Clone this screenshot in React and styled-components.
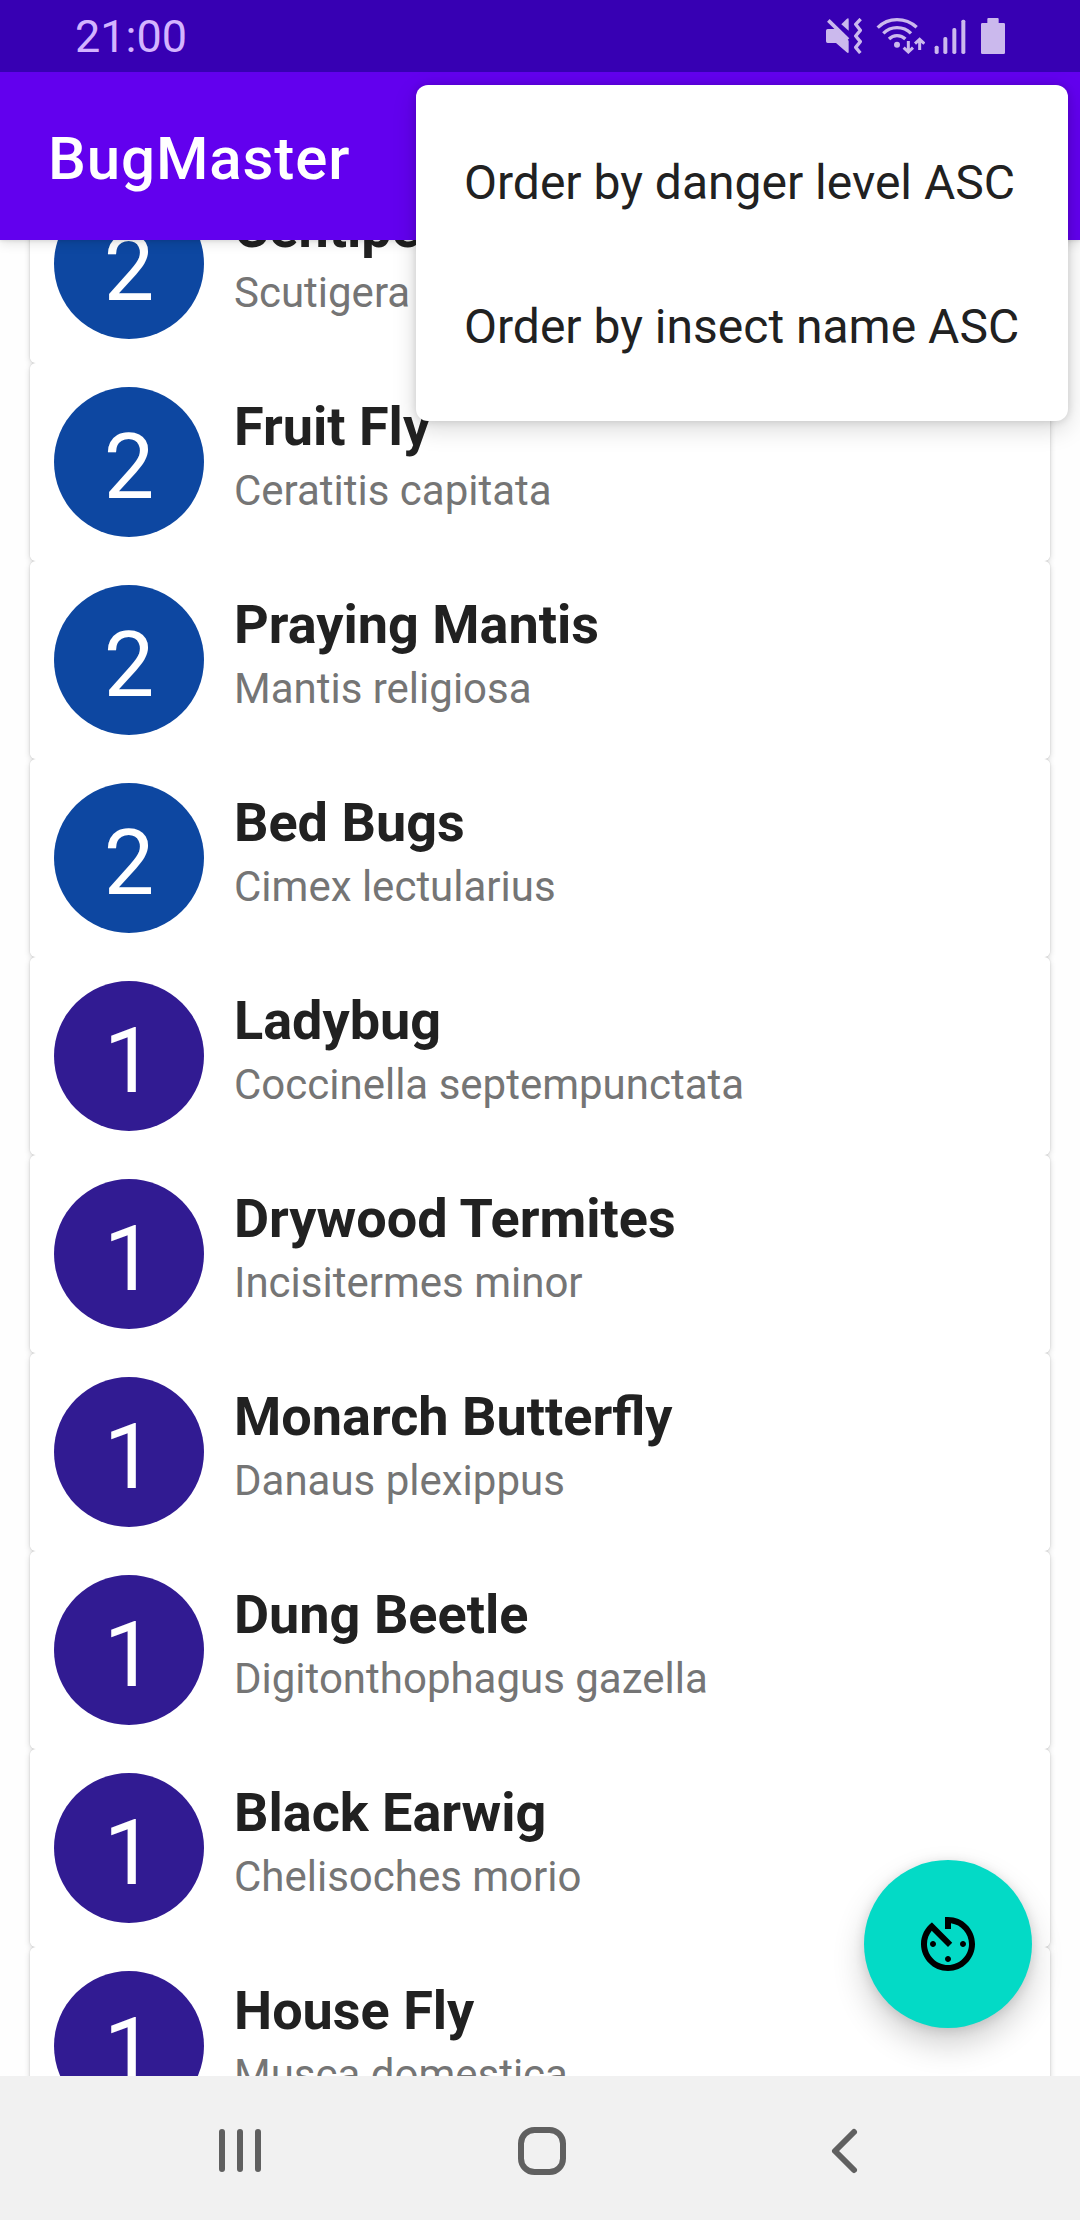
import React from "react";
import styled, { createGlobalStyle } from "styled-components";

const GlobalStyle = createGlobalStyle`
  * { box-sizing: border-box; }
  html, body { margin: 0; padding: 0; }
  body {
    width: 1080px;
    height: 2220px;
    overflow: hidden;
    background: #fefefe;
    font-family: Roboto, "Noto Sans", sans-serif;
  }
`;

const Screen = styled.div`
  position: relative;
  display: flex;
  flex-direction: column;
  width: 1080px;
  height: 2220px;
  overflow: hidden;
  background: #fefefe;
`;

const StatusBar = styled.header`
  display: flex;
  flex: none;
  align-items: center;
  justify-content: space-between;
  height: 72px;
  padding: 0 75px;
  background: #3700b3;
  z-index: 2;
`;

const Clock = styled.time`
  font-size: 45px;
  line-height: 54px;
  padding-top: 2px;
  color: #d3b4ff;
`;

const StatusIcons = styled.div`
  display: flex;
  align-items: center;
`;

const StatusIcon = styled.svg`
  display: block;
  width: ${(p) => p.$width}px;
  height: 36px;
  margin-left: ${(p) => p.$gap || 0}px;
  fill: #cbb9ed;
  stroke: #cbb9ed;
  stroke-width: 0;
`;

const AppBar = styled.div`
  display: flex;
  flex: none;
  align-items: center;
  height: 168px;
  padding: 5px 48px 0;
  background: #6200ee;
  box-shadow: 0 2px 12px rgba(0, 0, 0, 0.14), 0 1px 3px rgba(0, 0, 0, 0.08);
  z-index: 1;
`;

const AppTitle = styled.h1`
  margin: 0;
  font-size: 60px;
  font-weight: 500;
  line-height: 70px;
  letter-spacing: 0.9px;
  color: #fff;
`;

const Content = styled.main`
  display: flex;
  flex: 1;
  flex-direction: column;
  justify-content: flex-end;
  min-height: 0;
  overflow: hidden;
  isolation: isolate;
`;

const List = styled.ul`
  display: flex;
  flex: none;
  flex-direction: column;
  margin: 0 0 -69px;
  padding: 0 30px;
  list-style: none;
`;

const Card = styled.li`
  position: relative;
  display: flex;
  flex: none;
  gap: 30px;
  height: 198px;
  padding: 24px;
  border-radius: 6px;
  background: #fff;

  &::before {
    content: "";
    position: absolute;
    inset: 0;
    z-index: -1;
    border-radius: 6px;
    box-shadow: 0 2px 6px rgba(0, 0, 0, 0.16), 0 0 2px rgba(0, 0, 0, 0.16);
  }
`;

const DangerLevel = styled.div`
  display: flex;
  flex: none;
  align-items: center;
  justify-content: center;
  width: 150px;
  height: 150px;
  padding-top: 12px;
  border-radius: 50%;
  background: ${(p) => (p.$level === 2 ? "#0d47a1" : "#311b92")};
  color: #fff;
  font-size: 90px;
  line-height: 106px;
`;

const Names = styled.div`
  display: flex;
  flex-direction: column;
  gap: 7px;
  padding-top: 8px;
  white-space: nowrap;
`;

const InsectName = styled.span`
  font-size: 54px;
  font-weight: 700;
  line-height: 64px;
  color: #212121;
`;

const ScientificName = styled.span`
  font-size: 42px;
  line-height: 50px;
  color: #757575;
`;

const Menu = styled.div`
  position: absolute;
  top: 85px;
  right: 12px;
  z-index: 5;
  display: flex;
  flex-direction: column;
  width: 652px;
  padding: 24px 0;
  border-radius: 12px;
  background: #fff;
  box-shadow: 0 8px 24px rgba(0, 0, 0, 0.15), 0 0 8px rgba(0, 0, 0, 0.14);
`;

const MenuItem = styled.button`
  display: flex;
  align-items: center;
  height: 144px;
  padding: 3px 48px 0;
  border: 0;
  background: none;
  font-family: inherit;
  font-size: 48px;
  line-height: 56px;
  text-align: left;
  white-space: nowrap;
  color: #212121;
`;

const Fab = styled.button`
  position: absolute;
  right: 48px;
  bottom: 192px;
  z-index: 3;
  display: flex;
  align-items: center;
  justify-content: center;
  width: 168px;
  height: 168px;
  padding: 0;
  border: 0;
  border-radius: 50%;
  background: #03dac6;
  box-shadow: 0 16px 32px rgba(0, 0, 0, 0.19), 0 2px 12px rgba(0, 0, 0, 0.12);
`;

const FabIcon = styled.svg`
  display: block;
  width: 72px;
  height: 72px;
  fill: #000;
`;

const NavBar = styled.nav`
  display: flex;
  flex: none;
  align-items: center;
  justify-content: space-between;
  height: 144px;
  padding: 6px 212px 0 216px;
  background: #f1f1f1;
  z-index: 2;
`;

const NavIcon = styled.svg`
  display: block;
  width: 48px;
  height: 48px;
  fill: none;
  stroke: #606060;
  stroke-width: 6;
  stroke-linecap: round;
  stroke-linejoin: round;
`;

const insects = [
  { name: "Centipede", latin: "Scutigera coleoptrata", level: 2 },
  { name: "Fruit Fly", latin: "Ceratitis capitata", level: 2 },
  { name: "Praying Mantis", latin: "Mantis religiosa", level: 2 },
  { name: "Bed Bugs", latin: "Cimex lectularius", level: 2 },
  { name: "Ladybug", latin: "Coccinella septempunctata", level: 1 },
  { name: "Drywood Termites", latin: "Incisitermes minor", level: 1 },
  { name: "Monarch Butterfly", latin: "Danaus plexippus", level: 1 },
  { name: "Dung Beetle", latin: "Digitonthophagus gazella", level: 1 },
  { name: "Black Earwig", latin: "Chelisoches morio", level: 1 },
  { name: "House Fly", latin: "Musca domestica", level: 1 },
];

const MuteIcon = () => (
  <StatusIcon $width={36} viewBox="138 54 108 108">
    <path d="M143 87H168L206 122V155Q206 162 200 157L168 129H143Q138 129 138 124V92Q138 87 143 87Z" />
    <path d="M184 73L200 57Q206 52 206 59V92Z" />
    <path d="M145 61L204 119" strokeWidth="11" fill="none" />
    <path d="M242 57L227 73L241 91L227 108L241 125L227 142L241 159" strokeWidth="10" strokeLinejoin="round" fill="none" />
  </StatusIcon>
);

const WifiIcon = () => (
  <StatusIcon $width={49} $gap={14} viewBox="289 54 147 108">
    <g fill="none" strokeWidth="10">
      <path d="M294 83Q318 59 352 59Q386 59 411 82" />
      <path d="M311 100Q328 83 352 83Q377 83 394 100" />
      <path d="M328 117Q338 107 352 107Q367 107 377 117" />
      <path d="M386 123V156M372 143L386 156L400 143" strokeWidth="9" />
      <path d="M420 150V118M406 131L420 118L434 131" strokeWidth="9" />
    </g>
    <circle cx="352" cy="134" r="9" />
  </StatusIcon>
);

const SignalIcon = () => (
  <StatusIcon $width={32} $gap={9} viewBox="462 54 96 108">
    <rect x="464" y="137" width="12" height="25" rx="5" />
    <rect x="490" y="111" width="12" height="51" rx="5" />
    <rect x="517" y="84" width="12" height="78" rx="5" />
    <rect x="544" y="59" width="12" height="103" rx="5" />
  </StatusIcon>
);

const BatteryIcon = () => (
  <StatusIcon $width={24} $gap={15} viewBox="603 54 72 108">
    <path d="M625 54H653Q656 54 656 57V69H671Q675 69 675 73V158Q675 162 671 162H607Q603 162 603 158V73Q603 69 607 69H622V57Q622 54 625 54Z" />
  </StatusIcon>
);

export default function App() {
  return (
    <>
      <GlobalStyle />
      <Screen>
        <StatusBar>
          <Clock>21:00</Clock>
          <StatusIcons>
            <MuteIcon />
            <WifiIcon />
            <SignalIcon />
            <BatteryIcon />
          </StatusIcons>
        </StatusBar>
        <AppBar>
          <AppTitle>BugMaster</AppTitle>
        </AppBar>
        <Content>
          <List>
            {insects.map((insect) => (
              <Card key={insect.name}>
                <DangerLevel $level={insect.level}>{insect.level}</DangerLevel>
                <Names>
                  <InsectName>{insect.name}</InsectName>
                  <ScientificName>{insect.latin}</ScientificName>
                </Names>
              </Card>
            ))}
          </List>
        </Content>
        <NavBar>
          <NavIcon viewBox="0 0 48 48">
            <path d="M6 5V42M24 5V42M42 5V42" />
          </NavIcon>
          <NavIcon viewBox="0 0 48 48">
            <rect x="3" y="3" width="42" height="42" rx="13.5" />
          </NavIcon>
          <NavIcon viewBox="0 0 48 48">
            <path d="M34 5L15 24L34 43" />
          </NavIcon>
        </NavBar>
        <Menu>
          <MenuItem>Order by danger level ASC</MenuItem>
          <MenuItem>Order by insect name ASC</MenuItem>
        </Menu>
        <Fab aria-label="Timer">
          <FabIcon viewBox="0 0 24 24">
            <path d="M11 17c0 .55.45 1 1 1s1-.45 1-1-.45-1-1-1-1 .45-1 1zm0-14v4h2V5.08c3.39.49 6 3.39 6 6.92 0 3.87-3.13 7-7 7s-7-3.13-7-7c0-1.68.59-3.22 1.58-4.42L12 13l1.41-1.41-6.8-6.8v.02C4.42 6.45 3 9.05 3 12c0 4.97 4.02 9 9 9 4.97 0 9-4.03 9-9s-4.03-9-9-9h-1zm7 9c0-.55-.45-1-1-1s-1 .45-1 1 .45 1 1 1 1-.45 1-1zM6 12c0 .55.45 1 1 1s1-.45 1-1-.45-1-1-1-1 .45-1 1z" />
          </FabIcon>
        </Fab>
      </Screen>
    </>
  );
}
